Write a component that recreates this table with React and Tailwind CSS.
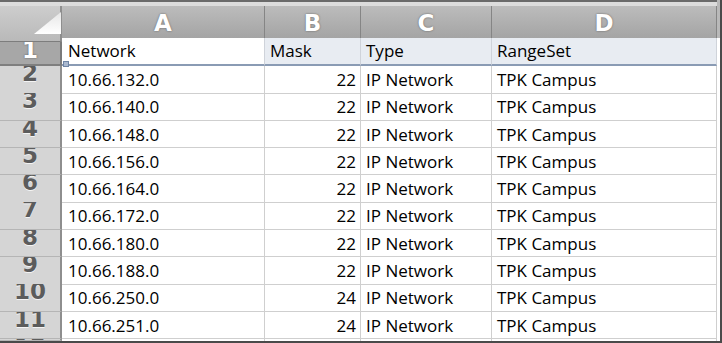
import React from 'react';

const rows = [
  ['10.66.132.0', 22],
  ['10.66.140.0', 22],
  ['10.66.148.0', 22],
  ['10.66.156.0', 22],
  ['10.66.164.0', 22],
  ['10.66.172.0', 22],
  ['10.66.180.0', 22],
  ['10.66.188.0', 22],
  ['10.66.250.0', 24],
  ['10.66.251.0', 24],
];

const grid = 'grid shrink-0 grid-cols-[62px_203px_96px_131px_225px]';
const cellFont = { fontFamily: '"Open Sans", "Liberation Sans", sans-serif' };
const numFont = { fontFamily: '"DejaVu Sans", sans-serif' };

// row number in the left gutter, pushed up so the top of the glyph is clipped
const RowLabel = ({ n }) => (
  <div
    className="overflow-hidden border-r-2 border-r-[#8e8e8e] border-b border-b-[#b5b5b5] bg-[#d5d5d5] text-center text-[23px] font-bold leading-none text-[#5c5c5c] [text-shadow:0_1px_0_#f4f4f4]"
    style={numFont}
  >
    <div className="-mt-[4px]">{n}</div>
  </div>
);

const ColHead = ({ label }) => (
  <div
    className="flex items-center justify-center border-r border-r-[#858585] border-b border-b-[#7d7d7d] bg-gradient-to-b from-[#bcbcbc] to-[#a2a2a2] text-[23px] font-bold text-white [text-shadow:0_0_2px_#5a5a5a]"
    style={numFont}
  >
    {label}
  </div>
);

const Cell = ({ children, right }) => (
  <div
    className={`flex items-center border-r border-b border-[#cfcfcf] pt-[1px] text-[17px] text-black ${right ? 'justify-end pr-[4px]' : 'pl-[5px]'}`}
    style={cellFont}
  >
    {children}
  </div>
);

export default function App() {
  return (
    <div className="flex h-[343px] w-[722px] flex-col overflow-hidden bg-white">
      <div className="flex h-[341px] shrink-0">
        <div className="flex w-[717px] flex-col">
          {/* top strip above the column headers */}
          <div className="h-[6px] shrink-0 border-t-2 border-t-[#6a6a6a] bg-[#dcdcdc]" />

          {/* column letters */}
          <div className={`${grid} h-[32px]`}>
            <div className="relative border-r-2 border-r-[#8e8e8e] border-b border-b-[#7d7d7d] bg-gradient-to-b from-[#cdcdcd] to-[#b9b9b9]">
              <svg className="absolute left-[34px] top-[6px]" width="27" height="22" viewBox="0 0 27 22">
                <defs>
                  <linearGradient id="tri" x1="0" y1="0" x2="0" y2="1">
                    <stop offset="0" stopColor="#e6e6e6" />
                    <stop offset="1" stopColor="#ffffff" />
                  </linearGradient>
                </defs>
                <polygon points="0,22 27,22 27,0" fill="url(#tri)" />
              </svg>
            </div>
            <ColHead label="A" />
            <ColHead label="B" />
            <ColHead label="C" />
            <ColHead label="D" />
          </div>

          {/* header row, A1 is the active cell */}
          <div className={`${grid} h-[28px]`}>
            <div
              className="overflow-hidden border-r-2 border-r-[#7a7a7a] border-b-2 border-b-[#7f7f7f] bg-[#a7a7a7] text-center text-[23px] font-bold leading-none text-white [text-shadow:0_0_2px_#555]"
              style={numFont}
            >
              <div className="mt-[1px]">1</div>
            </div>
            <div
              className="relative flex items-center border-b-2 border-b-[#8a9bb4] border-r border-r-[#cfd3da] bg-white pl-[6px] text-[17px] text-black"
              style={cellFont}
            >
              Network
              <div className="absolute -bottom-[3px] left-[1px] h-[6px] w-[6px] border border-[#6f85a5] bg-[#a9b8cf]" />
            </div>
            {['Mask', 'Type', 'RangeSet'].map((h) => (
              <div
                key={h}
                className="flex items-center border-b-2 border-b-[#8a9bb4] border-r border-r-[#cfd3da] bg-[#e8ecf2] pl-[5px] text-[17px] text-black"
                style={cellFont}
              >
                {h}
              </div>
            ))}
          </div>

          {rows.map(([net, mask], i) => (
            <div key={net} className={`${grid} h-[27.3px]`}>
              <RowLabel n={i + 2} />
              <Cell>
                <span className="pl-[1px]">{net}</span>
              </Cell>
              <Cell right>{mask}</Cell>
              <Cell>IP Network</Cell>
              <Cell>TPK Campus</Cell>
            </div>
          ))}

          {/* sliver of row 12 */}
          <div className="grid min-h-0 flex-1 grid-cols-[62px_203px_96px_131px_225px] overflow-hidden">
            <RowLabel n={12} />
            <div className="border-r border-[#cfcfcf]" />
            <div className="border-r border-[#cfcfcf]" />
            <div className="border-r border-[#cfcfcf]" />
            <div className="border-r border-[#cfcfcf]" />
          </div>
        </div>
        <div className="flex w-[3px] flex-col">
          <div className="h-[38px] bg-[#b9b9b9]" />
          <div className="flex-1 bg-white" />
        </div>
        <div className="w-[2px] bg-[#4a4a4a]" />
      </div>
      <div className="h-[2px] shrink-0 bg-[#4a4a4a]" />
    </div>
  );
}
